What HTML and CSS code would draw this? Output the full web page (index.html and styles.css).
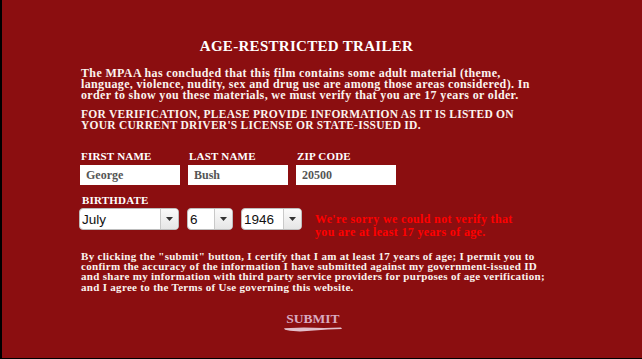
FILE: index.html
```html
<!DOCTYPE html>
<html lang="en">
<head>
  <meta charset="UTF-8" />
  <title>Age-Restricted Trailer</title>
  <link rel="stylesheet" href="styles.css">
</head>
<body>
  <div class="panel">
    <div class="gate">
      <h1 class="title">AGE-RESTRICTED TRAILER</h1>
      <p class="intro">The MPAA has concluded that this film contains some adult material (theme, language, violence, nudity, sex and drug use are among those areas considered). In order to show you these materials, we must verify that you are 17 years or older.</p>
      <p class="notice">FOR VERIFICATION, PLEASE PROVIDE INFORMATION AS IT IS LISTED ON YOUR CURRENT DRIVER'S LICENSE OR STATE-ISSUED ID.</p>

      <div class="fields">
        <label class="field">
          <span class="label">FIRST NAME</span>
          <input type="text" value="George" />
        </label>
        <label class="field">
          <span class="label">LAST NAME</span>
          <input type="text" value="Bush" />
        </label>
        <label class="field">
          <span class="label">ZIP CODE</span>
          <input type="text" value="20500" />
        </label>
      </div>

      <span class="label birth">BIRTHDATE</span>
      <div class="birth-row">
        <div class="select month">
          <select><option>July</option></select>
          <span class="arrow"><svg width="7" height="4" viewBox="0 0 7 4"><path d="M0 0h7L3.5 4z" fill="#333"/></svg></span>
        </div>
        <div class="select day">
          <select><option>6</option></select>
          <span class="arrow"><svg width="7" height="4" viewBox="0 0 7 4"><path d="M0 0h7L3.5 4z" fill="#333"/></svg></span>
        </div>
        <div class="select year">
          <select><option>1946</option></select>
          <span class="arrow"><svg width="7" height="4" viewBox="0 0 7 4"><path d="M0 0h7L3.5 4z" fill="#333"/></svg></span>
        </div>
        <p class="error">We're sorry we could not verify that<br>you are at least 17 years of age.</p>
      </div>

      <p class="legal">By clicking the "submit" button, I certify that I am at least 17 years of age; I permit you to confirm the accuracy of the information I have submitted against my government-issued ID and share my information with third party service providers for purposes of age verification; and I agree to the Terms of Use governing this website.</p>

      <div class="submit-wrap">
        <button class="submit">SUBMIT</button>
        <svg class="brush" width="58" height="5" viewBox="0 0 58 5">
          <path d="M0 1.2 L20 0.6 L40 1 L57 0.4 L58 2 L44 2.6 L30 3.6 L16 4.4 L6 3.8 L1 2.8 Z" fill="#e2bfcb"/>
        </svg>
      </div>
    </div>
  </div>
</body>
</html>
```

FILE: styles.css
```css
body {
  margin: 0;
  background: #000;
  font-family: "Liberation Serif", "Times New Roman", serif;
  font-weight: bold;
  overflow: hidden;
}

.panel {
  margin-left: 2px;
  width: 640px;
  height: 358px;
  background: #8b0e10;
  color: #fbf3ee;
}

.gate {
  width: 470px;
  padding: 38px 0 0 79px;
}

.title {
  margin: 0 19px 0 0;
  font-size: 15px;
  line-height: 16px;
  letter-spacing: 0.3px;
  text-align: center;
  color: #fff;
}

.intro {
  margin: 14px 0 0;
  font-size: 12px;
  line-height: 11px;
  letter-spacing: 0.35px;
}

.notice {
  margin: 8px 0 0;
  font-size: 11.5px;
  line-height: 10.5px;
  letter-spacing: 0.25px;
}

.fields {
  display: flex;
  gap: 8px;
  margin-top: 20px;
  margin-left: -1px;
}

.field {
  display: flex;
  flex-direction: column;
  gap: 3px;
}

.label {
  font-size: 11px;
  line-height: 12px;
  letter-spacing: 0.2px;
  padding-left: 1px;
  color: #fff;
}

.field input {
  width: 100px;
  height: 20px;
  box-sizing: border-box;
  border: none;
  outline: none;
  padding: 1px 6px 0;
  font-family: inherit;
  font-weight: bold;
  font-size: 12px;
  color: #555;
  background: #fff;
}

.birth {
  display: block;
  margin-top: 9px;
}

.birth-row {
  display: flex;
  align-items: flex-start;
  gap: 8px;
  margin-top: 2px;
  margin-left: -2px;
}

.select {
  position: relative;
  height: 22px;
  box-sizing: border-box;
  border: 1px solid #bdbdbd;
  border-radius: 4px;
  background: #fff;
  display: flex;
  overflow: hidden;
}

.select select {
  appearance: none;
  -webkit-appearance: none;
  border: none;
  outline: none;
  background: transparent;
  flex: 1;
  min-width: 0;
  padding: 0 0 0 2px;
  font-family: "Liberation Sans", Arial, sans-serif;
  font-size: 13.5px;
  color: #111;
}

.arrow {
  width: 17px;
  border-left: 1px solid #c9c9c9;
  background: linear-gradient(#fafafa, #e6e6e6);
  display: flex;
  align-items: center;
  justify-content: center;
}

.month { width: 100px; }
.day { width: 46px; }
.year { width: 61px; }

.error {
  margin: 5px 0 0 5px;
  font-size: 12px;
  line-height: 13px;
  letter-spacing: 0.35px;
  color: #f00;
}

.legal {
  margin: 12px 0 0;
  font-size: 11px;
  line-height: 10.2px;
  letter-spacing: 0.3px;
}

.submit-wrap {
  display: flex;
  flex-direction: column;
  align-items: center;
  margin-top: 19px;
  margin-right: 6px;
}

.submit {
  border: none;
  background: transparent;
  padding: 0;
  font-family: inherit;
  font-weight: bold;
  font-size: 13.5px;
  line-height: 16px;
  color: #d9aac0;
  cursor: pointer;
}

.brush {
  display: block;
}
```
